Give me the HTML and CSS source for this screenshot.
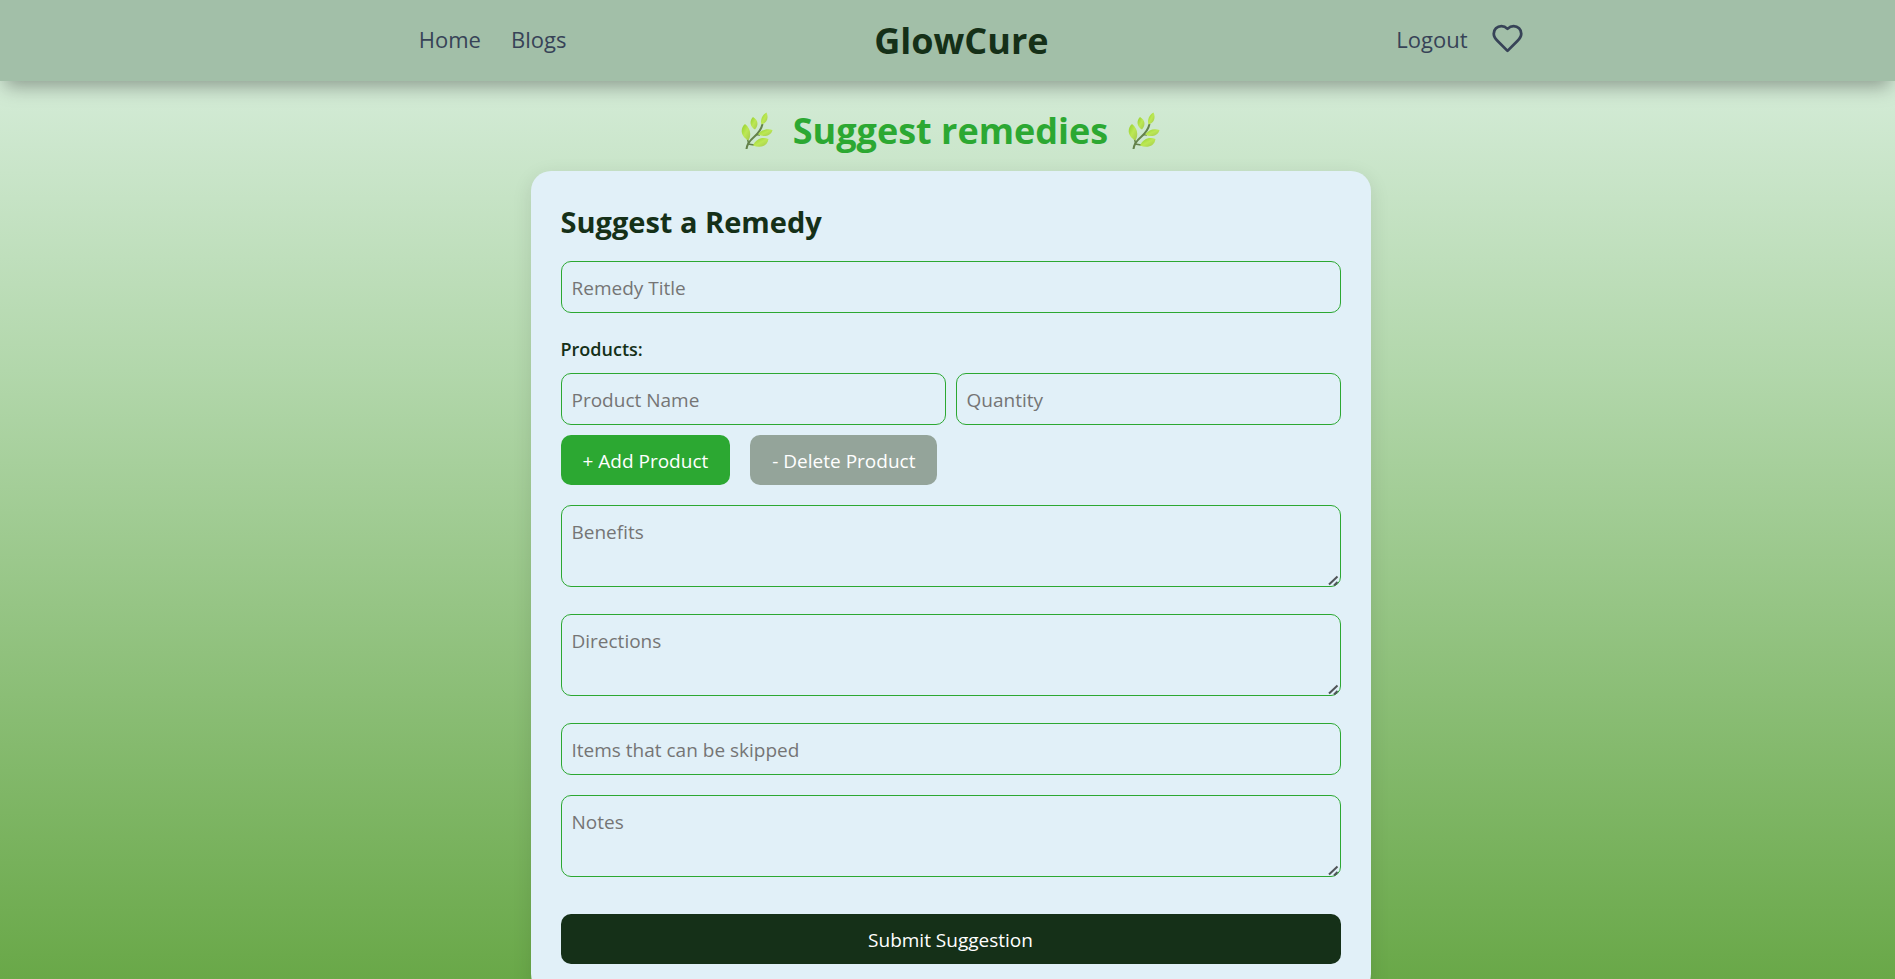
FILE: index.html
```
<!DOCTYPE html>
<html lang="en">
<head>
<meta charset="utf-8">
<meta name="viewport" content="width=device-width, initial-scale=1">
<title>GlowCure - Suggest remedies</title>
<link rel="stylesheet" href="styles.css">
</head>
<body>
<svg class="sprite" aria-hidden="true">
  <defs>
    <linearGradient id="leaf-fill" x1="0" y1="0" x2="1" y2="1">
      <stop offset="0" stop-color="#93cf2c"/>
      <stop offset="0.5" stop-color="#bce854"/>
      <stop offset="1" stop-color="#a3c94c"/>
    </linearGradient>
    <symbol id="herb" viewBox="0 0 32 38">
      <path d="M5.500 37 Q6 31 13 25 Q20 19 21.500 12" fill="none" stroke="#64824a" stroke-width="2"/>
      <path d="M7 32 L13 33 M15 22.500 L19 23 M7.500 31 L6.500 27" fill="none" stroke="#64824a" stroke-width="1.500"/>
      <path d="M25.500 .5 C21 3 19 8 20.500 12.500 C26 11 28 6 25.500 .5Z" fill="url(#leaf-fill)"/>
      <path d="M12 5 C8 9 9 15 14 17.500 C18 13 17 8 12 5Z" fill="url(#leaf-fill)"/>
      <path d="M4 12 C-1.500 17 0 24.500 7.500 28.500 C11 22 9 16 4 12Z" fill="url(#leaf-fill)"/>
      <path d="M31.500 18 C26 16 21 17.500 17 22.500 C23 25.500 30 24 31.500 18Z" fill="url(#leaf-fill)"/>
      <path d="M27.500 27 C21 24.500 15 27 12 33.500 C19 36.500 26.500 34.500 27.500 27Z" fill="url(#leaf-fill)"/>
    </symbol>
  </defs>
</svg>

<header class="site-header">
  <nav class="nav-group" aria-label="Main">
    <a class="nav-link" href="#">Home</a>
    <a class="nav-link" href="#">Blogs</a>
  </nav>
  <a class="brand" href="#">GlowCure</a>
  <div class="nav-group nav-account">
    <a class="nav-link" href="#">Logout</a>
    <a class="nav-link" href="#" aria-label="Favourites">
      <svg class="heart" viewBox="0 0 24 24" aria-hidden="true">
        <path d="M19 14c1.490-1.460 3-3.210 3-5.500A5.500 5.500 0 0 0 16.500 3c-1.760 0-3 .5-4.500 2-1.500-1.500-2.740-2-4.500-2A5.500 5.500 0 0 0 2 8.500c0 2.300 1.500 4.050 3 5.500l7 7Z"/>
      </svg>
    </a>
  </div>
</header>

<main class="page">
  <h1 class="page-title">
    <svg class="herb" aria-hidden="true"><use href="#herb"/></svg>
    Suggest remedies
    <svg class="herb" aria-hidden="true"><use href="#herb"/></svg>
  </h1>

  <form class="card">
    <h2 class="card-title">Suggest a Remedy</h2>
    <input class="field" type="text" placeholder="Remedy Title" aria-label="Remedy Title">
    <fieldset class="products">
      <legend class="products-label">Products:</legend>
      <div class="product-row">
        <input class="field" type="text" placeholder="Product Name" aria-label="Product Name">
        <input class="field" type="text" placeholder="Quantity" aria-label="Quantity">
      </div>
      <div class="product-actions">
        <button class="button button-add" type="button">+ Add Product</button>
        <button class="button button-delete" type="button">- Delete Product</button>
      </div>
    </fieldset>
    <textarea class="field area" placeholder="Benefits" aria-label="Benefits"></textarea>
    <textarea class="field area" placeholder="Directions" aria-label="Directions"></textarea>
    <input class="field" type="text" placeholder="Items that can be skipped" aria-label="Items that can be skipped">
    <textarea class="field area" placeholder="Notes" aria-label="Notes"></textarea>
    <button class="button button-submit" type="submit">Submit Suggestion</button>
  </form>
</main>
</body>
</html>
```
FILE: styles.css
```
* {
  box-sizing: border-box;
}

body {
  margin: 0;
  min-height: 100vh;
  font-family: "Segoe UI", "Open Sans", "Noto Sans", sans-serif;
  font-size: 19px;
  color: #153018;
  background: linear-gradient(to bottom, #ddf1e3 0, #b2d7ab 370px, #69a848 979px) no-repeat #69a848;
}

.sprite {
  position: absolute;
  width: 0;
  height: 0;
}

.site-header {
  display: flex;
  align-items: center;
  justify-content: space-between;
  padding: 13px 19.6% 13px 22.1%;
  background: #a2bfa8;
  box-shadow: 0 10px 18px -5px rgba(0, 0, 0, 0.35);
}

.nav-group {
  display: flex;
  align-items: center;
  gap: 30px;
  padding-bottom: 4px;
}

.nav-account {
  gap: 23px;
  padding-left: 40px;
}

.nav-link {
  display: flex;
  font-size: 22px;
  font-weight: 500;
  line-height: 30px;
  color: #374357;
  text-decoration: none;
}

.brand {
  font-size: 36px;
  font-weight: 700;
  line-height: 55px;
  color: #153018;
  text-decoration: none;
}

.heart {
  width: 33px;
  height: 33px;
  fill: none;
  stroke: currentColor;
  stroke-width: 2;
  stroke-linecap: round;
  stroke-linejoin: round;
}

.page {
  padding-left: 6px;
}

.page-title {
  display: flex;
  align-items: center;
  justify-content: center;
  gap: 20px;
  margin: 0;
  padding: 25px 0 15px;
  font-size: 36px;
  font-weight: 700;
  line-height: 50px;
  color: #2ca832;
}

.herb {
  width: 32px;
  height: 38px;
}

.card {
  display: flex;
  flex-direction: column;
  width: 100%;
  max-width: 840px;
  margin: 0 auto;
  padding: 30px;
  border-radius: 20px;
  background: #e1f0f8;
  box-shadow: 0 5px 20px rgba(0, 0, 0, 0.1);
}

.card-title {
  margin: 0 0 18px;
  font-size: 29px;
  font-weight: 700;
  line-height: 42px;
}

.field {
  display: block;
  width: 100%;
  height: 52px;
  margin: 0 0 20px;
  padding: 11px 10px 9px;
  border: 1px solid #2ca832;
  border-radius: 10px;
  background: transparent;
  color: #153018;
  font: inherit;
  line-height: 30px;
}

.field::placeholder {
  color: #757575;
}

.area {
  height: 82px;
  margin-bottom: 27px;
  resize: vertical;
}

.area::-webkit-resizer {
  background: url("data:image/svg+xml,%3Csvg xmlns='http://www.w3.org/2000/svg' width='15' height='15'%3E%3Cpath d='M4 13.500L12.500 5.500M9 14.500L12.500 11' stroke='%23505458' stroke-width='2'/%3E%3C/svg%3E") no-repeat right bottom;
}

.products {
  margin: 0 0 20px;
  padding: 0;
  border: 0;
}

.products-label {
  padding: 1px 0 9px;
  font-size: 18px;
  font-weight: 600;
  line-height: 30px;
}

.product-row {
  display: flex;
  gap: 10px;
}

.product-row .field {
  margin-bottom: 10px;
}

.product-actions {
  display: flex;
  gap: 20px;
}

.button {
  padding: 11px 22px 9px;
  border: 0;
  border-radius: 10px;
  color: #ffffff;
  font: inherit;
  line-height: 30px;
}

.button-add {
  background: #2ca832;
}

.button-delete {
  background: #94a49a;
}

.button-submit {
  margin-top: 10px;
  background: #153018;
}
```
